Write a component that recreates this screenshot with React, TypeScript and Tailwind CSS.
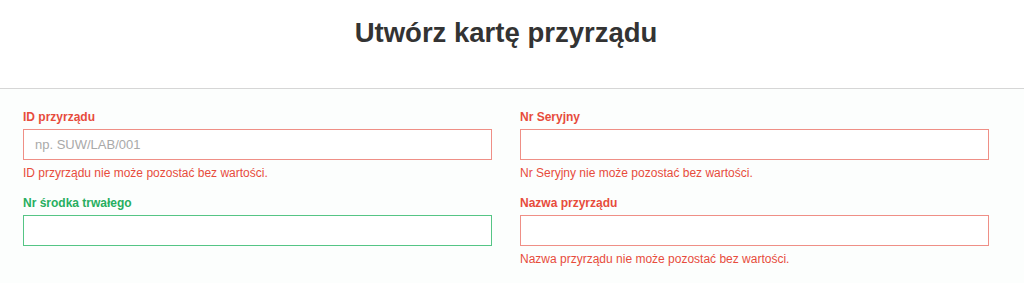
import clsx from 'clsx';

const font = { fontFamily: '"Liberation Sans", Arial, sans-serif' };

type FieldProps = {
  label: string;
  placeholder?: string;
  error?: string;
  valid?: boolean;
};

function Field({ label, placeholder, error, valid }: FieldProps) {
  return (
    <div className="flex flex-col">
      <label
        className={clsx(
          'text-[12px] leading-[14px] font-bold mb-[5px]',
          valid ? 'text-[#27ae60]' : 'text-[#e74c3c]'
        )}
      >
        {label}
      </label>
      <input
        type="text"
        placeholder={placeholder}
        className={clsx(
          'h-[31px] w-full bg-white px-[11px] text-[13px] text-[#555] placeholder:text-[#a9a9a9] outline-none border',
          valid ? 'border-[#55c585]' : 'border-[#ef8f86]'
        )}
        style={font}
      />
      {error && (
        <p className="mt-[6px] text-[12px] leading-[14px] text-[#e74c3c]">{error}</p>
      )}
    </div>
  );
}

export default function App() {
  return (
    <div className="min-h-[283px] bg-[#fcfefd]" style={font}>
      {/* Header */}
      <div className="h-[89px] bg-white border-b border-[#d6d6d6] pt-[17px] pl-[23px] pr-[35px]">
        <h1 className="text-center text-[27.5px] leading-[32px] font-bold text-[#333333]">
          Utwórz kartę przyrządu
        </h1>
      </div>

      {/* Form */}
      <div className="pl-[23px] pr-[35px] pt-[21px]">
        <div className="grid grid-cols-2 gap-x-[28px] gap-y-[16px]">
          <Field
            label="ID przyrządu"
            placeholder="np. SUW/LAB/001"
            error="ID przyrządu nie może pozostać bez wartości."
          />
          <Field label="Nr Seryjny" error="Nr Seryjny nie może pozostać bez wartości." />
          <Field label="Nr środka trwałego" valid />
          <Field
            label="Nazwa przyrządu"
            error="Nazwa przyrządu nie może pozostać bez wartości."
          />
        </div>
      </div>
    </div>
  );
}
